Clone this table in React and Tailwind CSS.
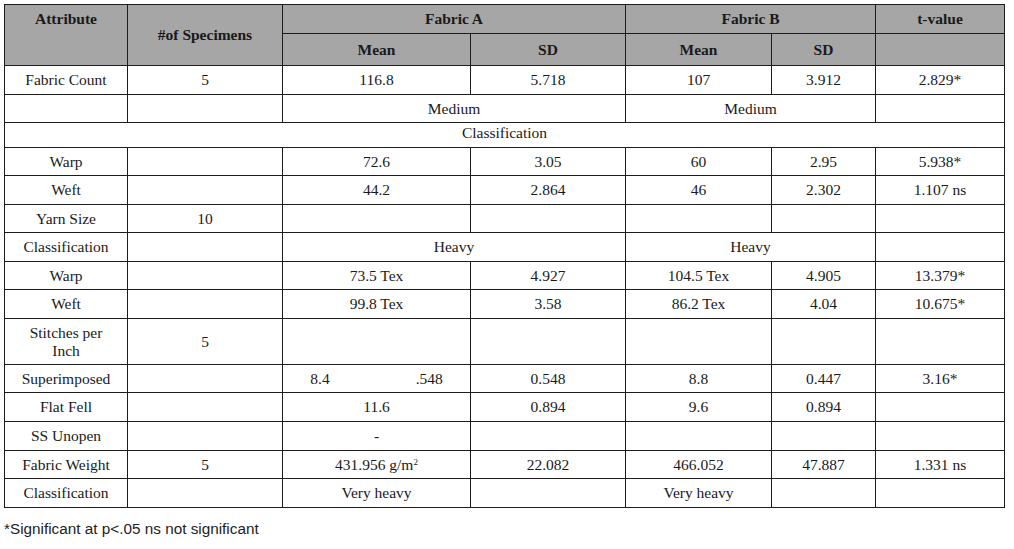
import React from "react";

const B = "border border-[#1c1c1c]";

function C({ children, cs, rs, className = "" }) {
  return (
    <td
      colSpan={cs}
      rowSpan={rs}
      className={`${B} text-center align-middle p-0 ${className}`}
    >
      {children}
    </td>
  );
}

export default function App() {
  const rows = [
    { h: "h-[28px]", cells: ["Warp", "", "72.6", "3.05", "60", "2.95", "5.938*"] },
    { h: "h-[29px]", cells: ["Weft", "", "44.2", "2.864", "46", "2.302", "1.107 ns"] },
    { h: "h-[28px]", cells: ["Yarn Size", "10", "", "", "", "", ""] },
  ];
  const rows2 = [
    { h: "h-[28px]", cells: ["Warp", "", "73.5 Tex", "4.927", "104.5 Tex", "4.905", "13.379*"] },
    { h: "h-[29px]", cells: ["Weft", "", "99.8 Tex", "3.58", "86.2 Tex", "4.04", "10.675*"] },
  ];
  const Row = ({ r }) => (
    <tr className={r.h}>
      {r.cells.map((c, i) => (
        <C key={i}>{c}</C>
      ))}
    </tr>
  );
  return (
    <div className="w-[1014px] h-[549px] bg-white text-[#1a1a1a]" style={{ fontFamily: "'Liberation Serif', serif" }}>
      <div className="pt-[4px] pl-[4px]">
        <table className="table-fixed border-collapse w-[1000px] text-[15.5px] leading-[18px]">
          <colgroup>
            <col className="w-[123px]" />
            <col className="w-[155px]" />
            <col className="w-[188px]" />
            <col className="w-[155px]" />
            <col className="w-[146px]" />
            <col className="w-[104px]" />
            <col className="w-[129px]" />
          </colgroup>
          <tbody>
            <tr className="h-[29px] bg-[#a6a6a6] font-bold">
              <C rs={2} className="!align-top pt-[5px]">Attribute</C>
              <C rs={2}>#of Specimens</C>
              <C cs={2}>Fabric A</C>
              <C cs={2}>Fabric B</C>
              <C>t-value</C>
            </tr>
            <tr className="h-[32px] bg-[#a6a6a6] font-bold">
              <C>Mean</C>
              <C>SD</C>
              <C>Mean</C>
              <C>SD</C>
              <C></C>
            </tr>
            <tr className="h-[29px]">
              <C>Fabric Count</C>
              <C>5</C>
              <C>116.8</C>
              <C>5.718</C>
              <C>107</C>
              <C>3.912</C>
              <C>2.829*</C>
            </tr>
            <tr className="h-[28px]">
              <C></C>
              <C></C>
              <C cs={2}>Medium</C>
              <C cs={2}>Medium</C>
              <C></C>
            </tr>
            <tr className="h-[25px]">
              <C cs={7} className="!align-top pt-[1px]">Classification</C>
            </tr>
            {rows.map((r, i) => (
              <Row key={i} r={r} />
            ))}
            <tr className="h-[29px]">
              <C>Classification</C>
              <C></C>
              <C cs={2}>Heavy</C>
              <C cs={2}>Heavy</C>
              <C></C>
            </tr>
            {rows2.map((r, i) => (
              <Row key={i} r={r} />
            ))}
            <tr className="h-[46px]">
              <C>
                Stitches per
                <br />
                Inch
              </C>
              <C>5</C>
              <C></C>
              <C></C>
              <C></C>
              <C></C>
              <C></C>
            </tr>
            <tr className="h-[28px]">
              <C>Superimposed</C>
              <C></C>
              <C>
                <span>8.4</span>
                <span className="ml-[86px]">.548</span>
              </C>
              <C>0.548</C>
              <C>8.8</C>
              <C>0.447</C>
              <C>3.16*</C>
            </tr>
            <tr className="h-[29px]">
              <C>Flat Fell</C>
              <C></C>
              <C>11.6</C>
              <C>0.894</C>
              <C>9.6</C>
              <C>0.894</C>
              <C></C>
            </tr>
            <tr className="h-[29px]">
              <C>SS Unopen</C>
              <C></C>
              <C>-</C>
              <C></C>
              <C></C>
              <C></C>
              <C></C>
            </tr>
            <tr className="h-[28px]">
              <C>Fabric Weight</C>
              <C>5</C>
              <C>
                431.956 g/m<sup className="text-[9px]">2</sup>
              </C>
              <C>22.082</C>
              <C>466.052</C>
              <C>47.887</C>
              <C>1.331 ns</C>
            </tr>
            <tr className="h-[29px]">
              <C>Classification</C>
              <C></C>
              <C>Very heavy</C>
              <C></C>
              <C>Very heavy</C>
              <C></C>
              <C></C>
            </tr>
          </tbody>
        </table>
        <div
          className="mt-[12px] text-[15.3px] leading-[18px] text-[#222]"
          style={{ fontFamily: "'Liberation Sans', Arial, sans-serif" }}
        >
          *Significant at p&lt;.05 ns not significant
        </div>
      </div>
    </div>
  );
}
